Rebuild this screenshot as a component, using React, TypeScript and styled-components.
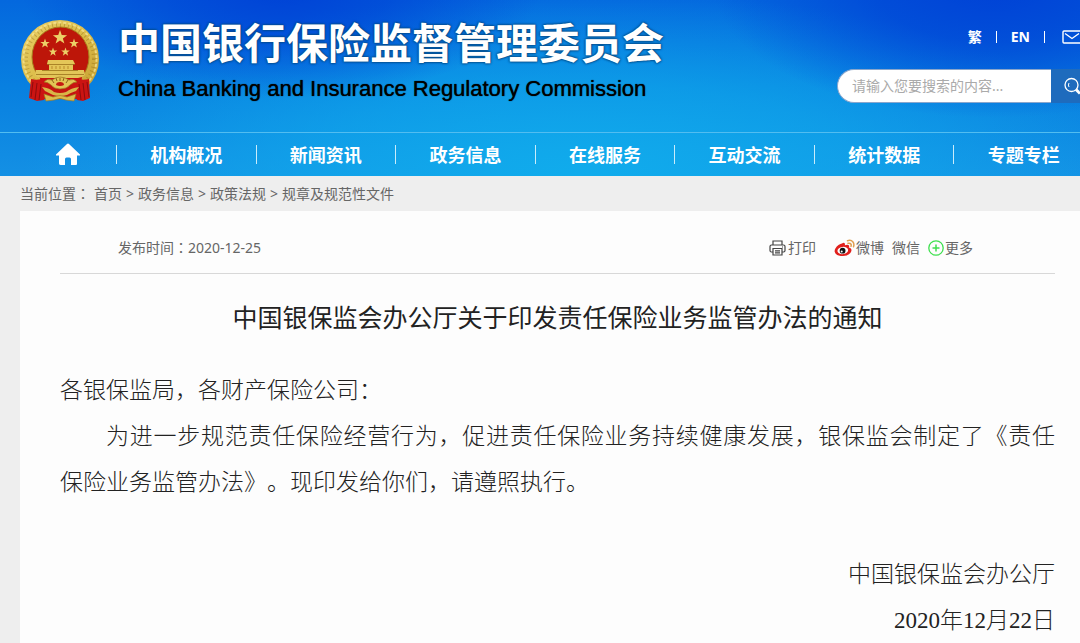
import React from "react";
import styled, { createGlobalStyle } from "styled-components";

const sans = '"Noto Sans", "Noto Sans CJK SC", sans-serif';

const GlobalStyle = createGlobalStyle`
  * { box-sizing: border-box; }
  body {
    margin: 0;
    background: #eee;
    color: #666;
    font: 14px/20px ${sans};
    overflow-x: hidden;
  }
  a { color: inherit; text-decoration: none; }
`;

const Page = styled.div`
  min-height: 100vh;
  display: flex;
  flex-direction: column;
  overflow: hidden;
`;

const Header = styled.header`
  color: #fff;
  background:
    radial-gradient(ellipse 24% 62% at 26% -6%, #0042d6 0%, #0042d6aa 42%, #0042d600 100%),
    radial-gradient(ellipse 26% 75% at 92% -8%, #0042d6 0%, #0042d6bb 42%, #0042d600 100%),
    radial-gradient(ellipse 52% 105% at 54% 100%, #10acec 0%, #10acec99 50%, #10acec00 100%),
    linear-gradient(180deg, #0468de 0%, #0880e0 50%, #1490e4 100%);
`;

const Banner = styled.div`
  display: flex;
  justify-content: space-between;
  height: 132px;
  padding: 19px 0 0 20px;
`;

const Brand = styled.a`
  display: flex;
  align-items: flex-start;
  gap: 18px;
`;

const BrandNames = styled.div`
  display: flex;
  flex-direction: column;
  gap: 12px;
  white-space: nowrap;
`;

const ChineseName = styled.div`
  font: bold 42px/44px "Noto Sans CJK SC", sans-serif;
  text-shadow: 0 0 2px #044a86, 0 0 2px #044a86, 0 0 3px #044a86;
`;

const EnglishName = styled.div`
  color: #000;
  font: 22px/28px "Liberation Sans", Arial, sans-serif;
  text-shadow: 0 0 1px #000;
`;

const Tools = styled.div`
  display: flex;
  flex-direction: column;
  align-items: flex-end;
  gap: 22px;
  margin-right: -15px;
  padding-top: 8px;
`;

const QuickLinks = styled.nav`
  display: flex;
  align-items: center;
  gap: 14px;
  padding-right: 13px;
  font-weight: bold;
`;

const Bar = styled.span`
  width: 1px;
  height: 12px;
  background: #fff;
`;

const QuickLink = styled.a`
  display: flex;
  &:last-child { margin-left: 3px; }
`;

const SearchForm = styled.form`
  display: flex;
  height: 34px;
`;

const SearchInput = styled.input`
  width: 214px;
  padding: 0 14px;
  border: 1px solid #8aa6cc;
  border-right: 0;
  border-radius: 17px 0 0 17px;
  background: #fff;
  color: #333;
  font: 14px/20px ${sans};
  outline: 0;
  &::placeholder { color: #aaa; opacity: 1; }
`;

const SearchButton = styled.button`
  display: flex;
  align-items: center;
  width: 44px;
  padding: 0 0 0 12px;
  border: 0;
  background: #1e6bbd;
  color: #fff;
  cursor: pointer;
`;

const MainNav = styled.nav`
  border-top: 1px solid #52bdf0;
  margin-right: -13px;
  padding-left: 20px;
`;

const NavList = styled.ul`
  display: flex;
  margin: 0;
  padding: 0;
  list-style: none;
`;

const NavItem = styled.li<{ $home?: boolean }>`
  flex: ${(p) => (p.$home ? "0 0 96px" : "1 1 0")};
  display: flex;
  align-items: center;
  height: 43px;
  &:not(:first-child)::before {
    content: "";
    width: 1px;
    height: 19px;
    background: #c9ecfb;
  }
`;

const NavLink = styled.a`
  flex: 1;
  display: flex;
  justify-content: center;
  padding-bottom: 2px;
  font: bold 18px/24px "Noto Sans CJK SC", sans-serif;
`;

const Crumbs = styled.nav`
  display: flex;
  align-items: center;
  gap: 4px;
  height: 35px;
  padding-left: 20px;
`;

const Colon = styled.span`
  font-family: "Noto Sans CJK TC", sans-serif;
  line-height: 1;
`;

const Article = styled.article`
  flex: 1;
  margin-left: 20px;
  padding: 0 25px 0 40px;
  background: #fdfdfd;
`;

const Meta = styled.div`
  display: flex;
  justify-content: space-between;
  align-items: center;
  padding: 26px 82px 14px 58px;
  border-bottom: 1px solid #d8d8d8;
  line-height: 22px;
`;

const Share = styled.div`
  display: flex;
  align-items: center;
  gap: 8px;
`;

const ShareButton = styled.button<{ $apart?: boolean }>`
  display: flex;
  align-items: center;
  gap: 1px;
  margin: 0 ${(p) => (p.$apart ? "10px" : "0")} 0 0;
  padding: 0;
  border: 0;
  background: none;
  color: #666;
  font: 14px/22px ${sans};
  cursor: pointer;
`;

const Title = styled.h1`
  margin: 22px 0 32px;
  color: #222;
  font: 25px/40px "Noto Sans CJK SC", sans-serif;
  text-align: center;
`;

const Content = styled.div`
  color: #222;
  font: 300 23px/46px "Liberation Serif", "Noto Sans CJK SC", serif;
  text-spacing-trim: space-all;
`;

const Paragraph = styled.p<{ $indent?: boolean }>`
  margin: 0;
  text-align: justify;
  text-indent: ${(p) => (p.$indent ? "2em" : "0")};
`;

const Unbroken = styled.span`
  white-space: nowrap;
`;

const Signature = styled.footer`
  display: flex;
  flex-direction: column;
  align-items: flex-end;
  margin-top: 46px;
`;

const star = (cx: number, cy: number, r: number) =>
  Array.from({ length: 10 }, (_, i) => {
    const a = (Math.PI / 5) * i - Math.PI / 2;
    const d = i % 2 ? r * 0.4 : r;
    return `${(cx + d * Math.cos(a)).toFixed(2)},${(cy + d * Math.sin(a)).toFixed(2)}`;
  }).join(" ");

const Emblem = () => (
  <svg width="80" height="84" viewBox="0 0 80 84" aria-hidden="true">
    <defs>
      <linearGradient id="gold" x1="0" y1="0" x2="1" y2="1">
        <stop offset="0" stopColor="#e9cf68" />
        <stop offset="0.5" stopColor="#dcbc48" />
        <stop offset="1" stopColor="#c39c30" />
      </linearGradient>
    </defs>
    <ellipse cx="40" cy="40" rx="39" ry="39" fill="url(#gold)" />
    <ellipse cx="40" cy="40" rx="34" ry="34" fill="none" stroke="#8d6a17" strokeWidth="4" strokeDasharray="1 3" opacity="0.4" />
    <ellipse cx="40" cy="40" rx="36.500" ry="36.500" fill="none" stroke="#f6e799" strokeWidth="2" strokeDasharray="3 2" opacity="0.7" />
    <ellipse cx="40.500" cy="38" rx="28.500" ry="30" fill="#bd1609" stroke="#a87e1d" />
    <path d="M20 58h42l-3 22H22Z" fill="#c41410" />
    <path d="M11 60 Q18 62 25 59 L29 66 L26 73 L24 81 L17 82 L9 79Z M69 60 Q62 62 56 59 L52 66 L55 73 L57 81 L63 82 L70 79Z" fill="#cb1412" />
    <path d="M13 63l-2 15M17 64l-2 17M21 65l-2 16M67 63l2 15M63 64l2 17M59 65l2 16" stroke="#8d0c0c" />
    <path d="M16 51h48l1 5q-3 3-7 3H22q-5 0-7-3Z" fill="#e2c558" />
    <path d="M28 41h25l2 4h-2v6H29v-6h-2Z" fill="#e4c658" />
    <path d="M27 45.500h28M16 55.500h48M22 51.500h36" stroke="#9b721b" strokeWidth="0.800" />
    <path d="M32 47v3M36 47v3M40 47v3M44 47v3M48 47v3" stroke="#b98a2a" />
    <path d="M31 66 Q28 63 24 63 Q27 59 32 61 Q36 58 40 58 Q45 58 49 61 Q54 59 57 63 Q53 63 50 66 Q47 70 40 70 Q34 70 31 66Z" fill="#e2c455" stroke="#9b721b" strokeWidth="0.700" />
    <path d="M34 64l-2-3M37 62l-1-3M40 62v-3M43 62l1-3M46 64l2-3" stroke="#8d6417" />
    <path d="M36 66 Q36 63 40 63 Q44 63 44 66 Q40 68 36 66Z" fill="#c51812" />
    <path d="M22 68 Q30 69 34 73 Q40 75 46 73 Q51 69 59 68 L56 72 Q50 74 47 76 Q40 78 33 76 Q29 74 25 72Z" fill="#d8b647" />
    <path d="M24 75 L33 78 Q40 75 47 78 L56 75 L54 82 L46 81 Q40 78 34 81 L26 82Z" fill="#dcbc4c" stroke="#a67b20" strokeWidth="0.700" />
    <g fill="#ecd067">
      <polygon points={star(40, 18.5, 7.5)} />
      <polygon points={star(25, 24.5, 5)} />
      <polygon points={star(54, 24.5, 5)} />
      <polygon points={star(33, 33, 4.5)} />
      <polygon points={star(45.5, 33, 4.5)} />
    </g>
  </svg>
);

const MailIcon = () => (
  <svg width="20" height="14" viewBox="0 0 20 14" fill="none" stroke="#fff" strokeWidth="1.400">
    <rect x="1" y="1" width="18" height="12" rx="1" />
    <path d="M3 3.500l7 5 7-5" />
  </svg>
);

const SearchIcon = () => (
  <svg width="20" height="20" viewBox="0 0 20 20" fill="none" stroke="#fff">
    <circle cx="8.500" cy="9" r="6.500" strokeWidth="1.300" />
    <path d="M6 11a4 4 0 0 1 0-4" />
    <path d="M13 13.500l4 4" strokeWidth="3" />
  </svg>
);

const HomeIcon = () => (
  <svg width="26" height="24" viewBox="0 0 26 24" fill="#fff">
    <path d="M13 1.500 Q13.600 1.500 14 2 L25 12.500 V13.500 H22 V22 Q22 23 21 23 H16 V17 Q16 15.500 14.500 15.500 H11.500 Q10 15.500 10 17 V23 H6 Q4 23 4 21.500 V13.500 H1 V12.500 L12 2 Q12.400 1.500 13 1.500Z" />
  </svg>
);

const PrinterIcon = () => (
  <svg width="18" height="16" viewBox="0 0 18 16" fill="none" stroke="#444" strokeWidth="1.200">
    <path d="M4 5V1h9v4M4 12H2.500Q1 12 1 10.500V6.500Q1 5 2.500 5h12Q16 5 16 6.500v4Q16 12 14.500 12H13" />
    <path d="M4 8.500h9V15H4zM6 10.800h5M6 12.900h5M13 7h1" />
  </svg>
);

const WeiboIcon = () => (
  <svg width="21" height="18" viewBox="0 0 21 18">
    <path d="M8 4.500 Q10 3 10.800 4.500 Q11.200 5.300 10.800 6.300 Q14 5 15 6.500 Q15.500 7.400 14.800 8.600 Q18 9.500 17.400 12 Q16 16.700 9 17 Q1.500 17 .6 12.500 Q.5 9 4.500 6 Q6.500 4.500 8 4.500Z" fill="#e1201c" />
    <ellipse cx="8.800" cy="11.500" rx="5.400" ry="3.600" fill="#fff" transform="rotate(-8 8.800 11.500)" />
    <circle cx="8.600" cy="11.700" r="2.900" fill="#111" />
    <circle cx="7.700" cy="12.500" r="1" fill="#fff" />
    <path d="M13.500 1.700 Q17 .5 19 3 Q20.500 5 19.500 7.700M14 4.300 Q16 3.800 17 5.200 Q17.400 6 17 7.200" fill="none" stroke="#e0a050" strokeWidth="1.500" strokeLinecap="round" />
  </svg>
);

const PlusIcon = () => (
  <svg width="16" height="16" viewBox="0 0 16 16" fill="none" stroke="#3fe04f">
    <circle cx="8" cy="8" r="7.200" strokeWidth="1.300" />
    <path d="M8 4.500v7M4.500 8h7" strokeWidth="1.500" />
  </svg>
);

const sections = ["机构概况", "新闻资讯", "政务信息", "在线服务", "互动交流", "统计数据", "专题专栏"];
const trail = ["首页", "政务信息", "政策法规", "规章及规范性文件"];

export default function App() {
  return (
    <>
      <GlobalStyle />
      <Page>
        <Header>
          <Banner>
            <Brand href="#">
              <Emblem />
              <BrandNames>
                <ChineseName lang="zh-CN">中国银行保险监督管理委员会</ChineseName>
                <EnglishName>China Banking and Insurance Regulatory Commission</EnglishName>
              </BrandNames>
            </Brand>
            <Tools>
              <QuickLinks>
                <QuickLink href="#">繁</QuickLink>
                <Bar />
                <QuickLink href="#">EN</QuickLink>
                <Bar />
                <QuickLink href="#" aria-label="邮箱">
                  <MailIcon />
                </QuickLink>
              </QuickLinks>
              <SearchForm role="search" onSubmit={(e) => e.preventDefault()}>
                <SearchInput type="text" aria-label="搜索" placeholder="请输入您要搜索的内容..." />
                <SearchButton type="submit" aria-label="搜索">
                  <SearchIcon />
                </SearchButton>
              </SearchForm>
            </Tools>
          </Banner>
          <MainNav>
            <NavList>
              <NavItem $home>
                <NavLink href="#" aria-label="首页">
                  <HomeIcon />
                </NavLink>
              </NavItem>
              {sections.map((name) => (
                <NavItem key={name}>
                  <NavLink href="#">{name}</NavLink>
                </NavItem>
              ))}
            </NavList>
          </MainNav>
        </Header>
        <Crumbs>
          <span>
            当前位置<Colon lang="zh-TW">：</Colon>
          </span>
          {trail.map((name, i) => (
            <React.Fragment key={name}>
              {i > 0 && <span>&gt;</span>}
              <a href="#">{name}</a>
            </React.Fragment>
          ))}
        </Crumbs>
        <Article lang="zh-CN">
          <Meta>
            <span>
              发布时间<Colon lang="zh-TW">：</Colon>2020-12-25
            </span>
            <Share>
              <ShareButton type="button" $apart>
                <PrinterIcon />
                打印
              </ShareButton>
              <ShareButton type="button">
                <WeiboIcon />
                微博
              </ShareButton>
              <ShareButton type="button">微信</ShareButton>
              <ShareButton type="button">
                <PlusIcon />
                更多
              </ShareButton>
            </Share>
          </Meta>
          <Title>中国银保监会办公厅关于印发责任保险业务监管办法的通知</Title>
          <Content>
            <Paragraph>各银保监局，各财产保险公司：</Paragraph>
            <Paragraph $indent>
              为进一步规范责任保险经营行为，促进责任保险业务持续健康发展，银保监会制定了《责任
              <Unbroken>保险业务监管办法》</Unbroken>。现印发给你们，请遵照执行。
            </Paragraph>
            <Signature>
              <span>中国银保监会办公厅</span>
              <time dateTime="2020-12-22">2020年12月22日</time>
            </Signature>
          </Content>
        </Article>
      </Page>
    </>
  );
}
